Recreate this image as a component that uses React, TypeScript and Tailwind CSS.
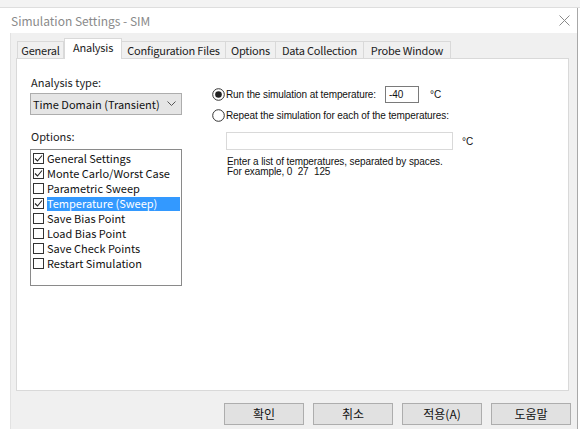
const tabs = [
  { label: "General", w: "w-[47px]" },
  { label: "Analysis", w: "w-[58px]", active: true },
  { label: "Configuration Files", w: "w-[105px]" },
  { label: "Options", w: "w-[51px]" },
  { label: "Data Collection", w: "w-[89px]" },
  { label: "Probe Window", w: "w-[88px]" },
];

const options = [
  { label: "General Settings", checked: true },
  { label: "Monte Carlo/Worst Case", checked: true },
  { label: "Parametric Sweep", checked: false },
  { label: "Temperature (Sweep)", checked: true, selected: true },
  { label: "Save Bias Point", checked: false },
  { label: "Load Bias Point", checked: false },
  { label: "Save Check Points", checked: false },
  { label: "Restart Simulation", checked: false },
];

const buttons = ["확인", "취소", "적용(A)", "도움말"];

const uiFont = "font-['Noto_Sans_CJK_KR',sans-serif] whitespace-nowrap";
const oldFont = "font-['Liberation_Sans',Arial,sans-serif] whitespace-nowrap";

function CheckBox({ checked }: { checked: boolean }) {
  return (
    <span className="w-[11px] h-[11px] border border-[#333] bg-white flex items-center justify-center shrink-0">
      {checked && (
        <svg width="9" height="9" viewBox="0 0 9 9">
          <polyline points="1,4.5 3.5,7 8,1.5" fill="none" stroke="#222" strokeWidth="1.1" />
        </svg>
      )}
    </span>
  );
}

function Radio({ on }: { on: boolean }) {
  return (
    <svg width="13" height="13" viewBox="0 0 13 13" className="shrink-0">
      <circle cx="6.5" cy="6.5" r="5.8" fill="white" stroke="#333" strokeWidth="1" />
      {on && <circle cx="6.5" cy="6.5" r="3.3" fill="#222" />}
    </svg>
  );
}

export default function App() {
  return (
    <div className="w-[580px] h-[429px] bg-white overflow-hidden">
      <div className="h-[8px] bg-[#f3f3f3] border-b border-[#dedede]" />
      <div className="w-[578px] border-r border-[#a8a8a8] flex flex-col">
        {/* title bar */}
        <div className="h-[25px] bg-white flex items-center justify-between pl-[11px] pr-[7px]">
          <span className={`${uiFont} text-[12px] text-[#8a8a8a]`}>Simulation Settings - SIM</span>
          <svg width="11" height="11" viewBox="0 0 11 11">
            <path d="M0.5 0.5L10.5 10.5M10.5 0.5L0.5 10.5" stroke="#8a8a8a" strokeWidth="1" />
          </svg>
        </div>

        {/* dialog body */}
        <div className="ml-[10px] h-[396px] bg-[#f0f0f0] border-l border-[#e2e2e2] pl-[5px] pr-[8px] pt-[5px]">
          <div className="flex items-end h-[20px] pl-[1px]">
            {tabs.map((t) =>
              t.active ? (
                <div
                  key={t.label}
                  className={`${t.w} h-[21px] -mb-[1px] bg-white border border-b-0 border-[#d9d9d9] flex items-center justify-center pb-[3px] relative z-10 ${uiFont} text-[11px] tracking-[-0.2px] text-[#222]`}
                >
                  {t.label}
                </div>
              ) : (
                <div
                  key={t.label}
                  className={`${t.w} h-[17px] bg-[#f0f0f0] border border-b-0 border-[#d9d9d9] -ml-[1px] first:ml-0 flex items-center justify-center ${uiFont} text-[11px] tracking-[-0.2px] text-[#222]`}
                >
                  {t.label}
                </div>
              )
            )}
          </div>

          {/* tab page */}
          <div className="h-[333px] bg-white border border-[#d9d9d9] flex">
            <div className="w-[166px] pl-[13px] pt-[15px] flex flex-col">
              <span className={`${uiFont} text-[11px] leading-[17px] text-[#222] pl-[1px]`}>Analysis type:</span>
              <div className="mt-[2px] h-[22px] w-[152px] bg-[#e5e5e5] border border-[#adadad] flex items-center justify-between pl-[2px] pr-[5px]">
                <span className={`${uiFont} text-[11px] text-[#111]`}>Time Domain (Transient)</span>
                <svg width="9" height="6" viewBox="0 0 9 6">
                  <polyline points="0.5,0.5 4.5,4.5 8.5,0.5" fill="none" stroke="#555" strokeWidth="1" />
                </svg>
              </div>
              <span className={`${uiFont} text-[11px] leading-[17px] text-[#222] pl-[1px] mt-[13px]`}>Options:</span>
              <div className="mt-[4px] h-[137px] w-[152px] bg-white border border-[#8a8a8a] pt-[1px] pl-[2px] pr-[1px]">
                {options.map((o) => (
                  <div key={o.label} className="h-[15px] flex items-center">
                    <CheckBox checked={o.checked} />
                    <span
                      className={`ml-[3px] flex-1 h-[14px] flex items-center ${uiFont} text-[11px] leading-none ${
                        o.selected ? "bg-[#3399ff] text-white" : "text-[#111]"
                      }`}
                    >
                      {o.label}
                    </span>
                  </div>
                ))}
              </div>
            </div>

            <div className={`ml-[29px] pt-[27px] flex flex-col ${oldFont} text-[10px] tracking-[-0.1px] text-[#111]`}>
              <div className="h-[17px] flex items-center">
                <Radio on />
                <span className="ml-[1px]">Run the simulation at temperature:</span>
                <div className="ml-[9px] w-[34px] h-[17px] border border-[#7a7a7a] bg-white flex items-center pl-[3px]">-40</div>
                <span className="ml-[11px]">°C</span>
              </div>
              <div className="h-[17px] mt-[4px] flex items-center">
                <Radio on={false} />
                <span className="ml-[1px]">Repeat the simulation for each of the temperatures:</span>
              </div>
              <div className="mt-[8px] flex items-center">
                <div className="ml-[14px] w-[227px] h-[18px] border border-[#d9d9d9] bg-white" />
                <span className="ml-[9px]">°C</span>
              </div>
              <div className="ml-[15px] mt-[7px] leading-[10px]">
                <div>Enter a list of temperatures, separated by spaces.</div>
                <div>For example, 0&nbsp; 27&nbsp; 125</div>
              </div>
            </div>
          </div>

          {/* dialog buttons */}
          <div className="mt-[12px] flex justify-end gap-[9px] -mr-[2px]">
            {buttons.map((b) => (
              <div
                key={b}
                className="w-[80px] h-[22px] bg-[#e1e1e1] border border-[#adadad] flex items-center justify-center font-['Noto_Sans_CJK_KR',sans-serif] text-[12px] text-[#111]"
              >
                {b}
              </div>
            ))}
          </div>
        </div>
      </div>
    </div>
  );
}
